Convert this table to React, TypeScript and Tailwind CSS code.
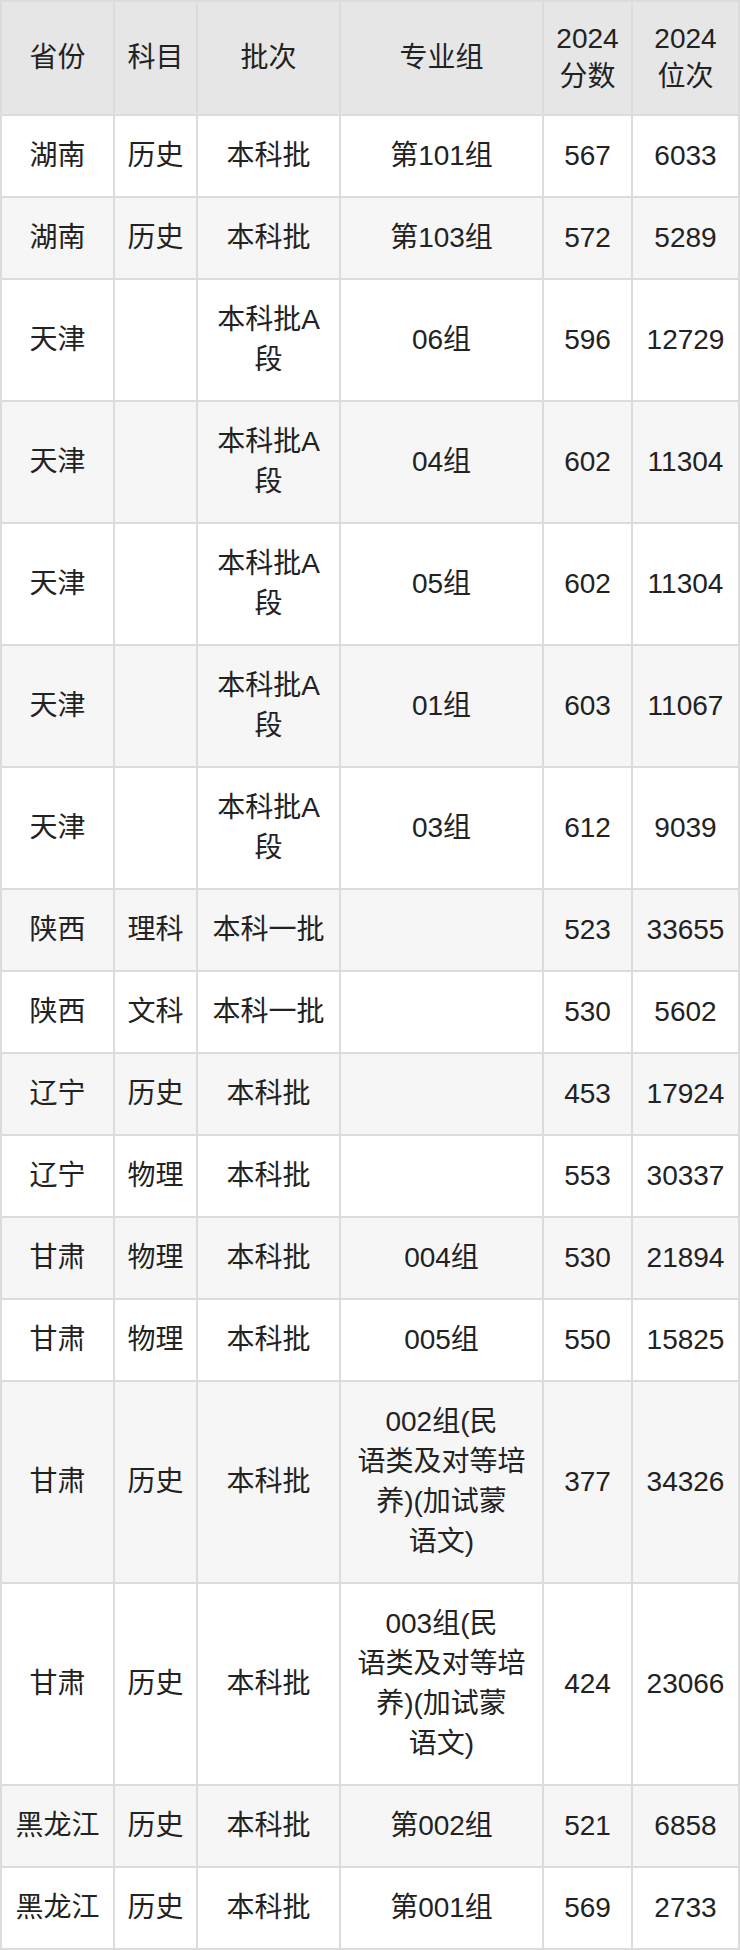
import React from "react";

type Row = {
  province: string;
  subject: string;
  batch: string;
  group: string | string[];
  score: string;
  rank: string;
};

const ROWS: Row[] = [
  { province: "湖南", subject: "历史", batch: "本科批", group: "第101组", score: "567", rank: "6033" },
  { province: "湖南", subject: "历史", batch: "本科批", group: "第103组", score: "572", rank: "5289" },
  { province: "天津", subject: "", batch: "本科批A段", group: "06组", score: "596", rank: "12729" },
  { province: "天津", subject: "", batch: "本科批A段", group: "04组", score: "602", rank: "11304" },
  { province: "天津", subject: "", batch: "本科批A段", group: "05组", score: "602", rank: "11304" },
  { province: "天津", subject: "", batch: "本科批A段", group: "01组", score: "603", rank: "11067" },
  { province: "天津", subject: "", batch: "本科批A段", group: "03组", score: "612", rank: "9039" },
  { province: "陕西", subject: "理科", batch: "本科一批", group: "", score: "523", rank: "33655" },
  { province: "陕西", subject: "文科", batch: "本科一批", group: "", score: "530", rank: "5602" },
  { province: "辽宁", subject: "历史", batch: "本科批", group: "", score: "453", rank: "17924" },
  { province: "辽宁", subject: "物理", batch: "本科批", group: "", score: "553", rank: "30337" },
  { province: "甘肃", subject: "物理", batch: "本科批", group: "004组", score: "530", rank: "21894" },
  { province: "甘肃", subject: "物理", batch: "本科批", group: "005组", score: "550", rank: "15825" },
  {
    province: "甘肃",
    subject: "历史",
    batch: "本科批",
    group: ["002组(民", "语类及对等培", "养)(加试蒙", "语文)"],
    score: "377",
    rank: "34326",
  },
  {
    province: "甘肃",
    subject: "历史",
    batch: "本科批",
    group: ["003组(民", "语类及对等培", "养)(加试蒙", "语文)"],
    score: "424",
    rank: "23066",
  },
  { province: "黑龙江", subject: "历史", batch: "本科批", group: "第002组", score: "521", rank: "6858" },
  { province: "黑龙江", subject: "历史", batch: "本科批", group: "第001组", score: "569", rank: "2733" },
];

function Cell({ children, bg }: { children?: React.ReactNode; bg: string }) {
  return (
    <div
      className={`${bg} flex items-center justify-center text-center px-[10px] py-[20px] leading-[40px]`}
    >
      <div>{children}</div>
    </div>
  );
}

function HeadCell({ children }: { children: React.ReactNode }) {
  return (
    <div className="bg-[#e6e6e6] flex items-center justify-center text-center px-[10px] py-[18px] leading-[38px]">
      <div>{children}</div>
    </div>
  );
}

export default function App() {
  return (
    <div
      className="w-[740px] bg-white text-[#222] text-[28px]"
      style={{ fontFamily: '"Liberation Sans", "Noto Sans CJK SC", sans-serif' }}
    >
      <div className="grid grid-cols-[111px_81px_141px_201px_87px_105px] gap-[2px] p-[2px] bg-[#dcdcdc]">
        {/* Header */}
        <HeadCell>省份</HeadCell>
        <HeadCell>科目</HeadCell>
        <HeadCell>批次</HeadCell>
        <HeadCell>专业组</HeadCell>
        <HeadCell>
          2024
          <br />
          分数
        </HeadCell>
        <HeadCell>
          2024
          <br />
          位次
        </HeadCell>

        {/* Body */}
        {ROWS.map((r, i) => {
          const bg = i % 2 === 1 ? "bg-[#f6f6f6]" : "bg-white";
          return (
            <React.Fragment key={i}>
              <Cell bg={bg}>{r.province}</Cell>
              <Cell bg={bg}>{r.subject}</Cell>
              <Cell bg={bg}>{r.batch}</Cell>
              <Cell bg={bg}>
                {Array.isArray(r.group)
                  ? r.group.map((line, j) => (
                      <React.Fragment key={j}>
                        {j > 0 && <br />}
                        {line}
                      </React.Fragment>
                    ))
                  : r.group}
              </Cell>
              <Cell bg={bg}>{r.score}</Cell>
              <Cell bg={bg}>{r.rank}</Cell>
            </React.Fragment>
          );
        })}
      </div>
    </div>
  );
}
